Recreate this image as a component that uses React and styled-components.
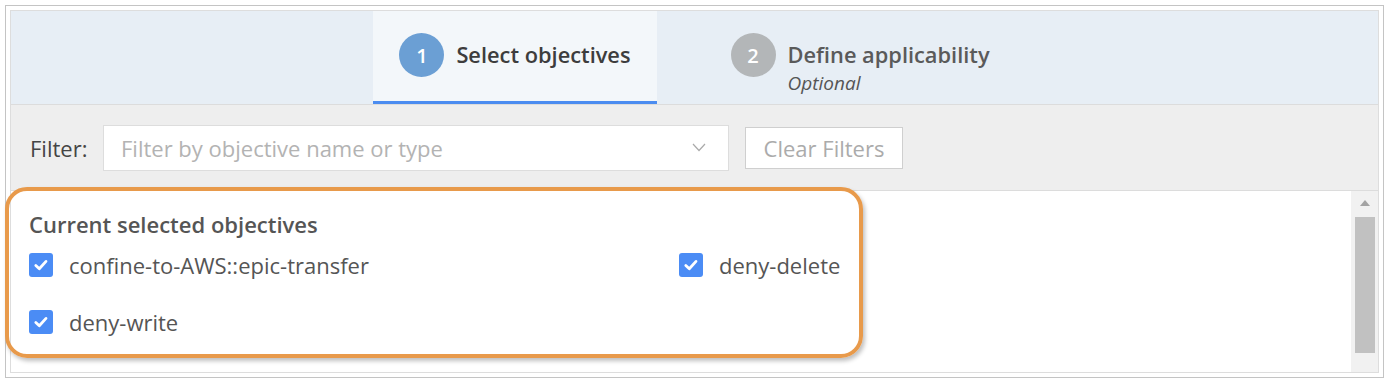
import React from 'react'
import styled, { createGlobalStyle } from 'styled-components'

const GlobalStyle = createGlobalStyle`
  body {
    margin: 0;
    background: #ffffff;
    font-family: "Open Sans", "Liberation Sans", sans-serif;
  }
`

const Frame = styled.div`
  margin: 5px;
  width: 1379px;
  height: 373px;
  box-sizing: border-box;
  border: 1px solid #c4c4c4;
  padding: 4px;
`

const Panel = styled.div`
  height: 100%;
  box-sizing: border-box;
  border: 1px solid #dddddd;
  display: flex;
  flex-direction: column;
  position: relative;
`

const StepBar = styled.div`
  height: 93px;
  background: #e7eef5;
  border-bottom: 1px solid #dcdcdc;
  display: flex;
  justify-content: center;
  gap: 48px;
`

const Step = styled.div`
  display: flex;
  align-items: flex-start;
  gap: 12px;
  padding: 22px 26px 0;
  box-sizing: border-box;
  background: ${p => (p.$active ? '#f3f7fa' : 'transparent')};
  border-bottom: 3px solid ${p => (p.$active ? '#4b8cf0' : 'transparent')};
`

const StepNumber = styled.div`
  width: 45px;
  height: 44px;
  border-radius: 50%;
  background: ${p => (p.$active ? '#6b9fd4' : '#b3b6b8')};
  color: #ffffff;
  font-size: 20px;
  font-weight: 600;
  display: flex;
  align-items: center;
  justify-content: center;
  flex-shrink: 0;
`

const StepText = styled.div`
  display: flex;
  flex-direction: column;
`

const StepTitle = styled.div`
  height: 44px;
  line-height: 44px;
  font-size: 21.8px;
  font-weight: 600;
  color: ${p => (p.$active ? '#3d3d3d' : '#5a5a5a')};
  white-space: nowrap;
`

const StepSub = styled.div`
  font-size: 19px;
  font-style: italic;
  color: #555555;
  line-height: 18px;
  margin-top: -3px;
`

const FilterBar = styled.div`
  height: 85px;
  background: #eeeeee;
  border-bottom: 1px solid #dcdcdc;
  display: flex;
  align-items: center;
  padding: 0 19px;
  gap: 16px;
`

const FilterLabel = styled.span`
  font-size: 22px;
  color: #444444;
  width: 57px;
`

const FilterInput = styled.div`
  width: 626px;
  height: 46px;
  box-sizing: border-box;
  background: #ffffff;
  border: 1px solid #dddddd;
  display: flex;
  align-items: center;
  justify-content: space-between;
  padding: 0 22px 0 17px;
  font-size: 22px;
  color: #b3b3b3;
`

const ClearButton = styled.button`
  height: 42px;
  width: 158px;
  box-sizing: border-box;
  background: #ffffff;
  border: 1px solid #cfcfcf;
  font-family: inherit;
  font-size: 22px;
  color: #ababab;
  padding: 0;
`

const Content = styled.div`
  flex: 1;
  display: flex;
  background: #ffffff;
`

const Objectives = styled.div`
  flex: 1;
  padding: 18px 18px 0;
`

const SectionTitle = styled.div`
  font-size: 22px;
  font-weight: 600;
  color: #555555;
  line-height: 30px;
`

const Grid = styled.div`
  display: grid;
  grid-template-columns: 650px 1fr;
  row-gap: 33px;
  margin-top: 14px;
`

const Item = styled.label`
  display: flex;
  align-items: center;
  gap: 16px;
  font-size: 22px;
  color: #555555;
  height: 24px;
  white-space: nowrap;
`

const Box = styled.span`
  width: 24px;
  height: 24px;
  border-radius: 3px;
  background: #4b8cf5;
  display: flex;
  align-items: center;
  justify-content: center;
  flex-shrink: 0;
`

const Scrollbar = styled.div`
  width: 27px;
  background: #f1f1f1;
  display: flex;
  flex-direction: column;
  align-items: center;
  padding-top: 9px;
  box-sizing: border-box;
`

const ScrollArrow = styled.div`
  width: 0;
  height: 0;
  border-left: 5px solid transparent;
  border-right: 5px solid transparent;
  border-bottom: 6px solid #a3a3a3;
`

const ScrollThumb = styled.div`
  width: 20px;
  height: 136px;
  background: #c1c1c1;
  margin-top: 11px;
`

const Highlight = styled.div`
  position: absolute;
  left: -6px;
  top: 176px;
  width: 858px;
  height: 171px;
  box-sizing: border-box;
  border: 4px solid #e89a4b;
  border-radius: 22px;
  box-shadow: 2px 3px 4px rgba(0, 0, 0, 0.25);
  pointer-events: none;
`

const Check = () => (
  <svg width="18" height="18" viewBox="0 0 18 18">
    <path d="M3.8 9.4 L7.3 12.8 L14 5.4" fill="none" stroke="#fff" strokeWidth="2.8" strokeLinecap="round" strokeLinejoin="round" />
  </svg>
)

const Chevron = () => (
  <svg width="14" height="9" viewBox="0 0 14 9">
    <path d="M1 1 L7 7.5 L13 1" fill="none" stroke="#aaaaaa" strokeWidth="1.2" />
  </svg>
)

const objectives = ['confine-to-AWS::epic-transfer', 'deny-delete', 'deny-write']

export default function App() {
  return (
    <>
      <GlobalStyle />
      <Frame>
        <Panel>
          <StepBar>
            <Step $active>
              <StepNumber $active>1</StepNumber>
              <StepText>
                <StepTitle $active>Select objectives</StepTitle>
              </StepText>
            </Step>
            <Step>
              <StepNumber>2</StepNumber>
              <StepText>
                <StepTitle>Define applicability</StepTitle>
                <StepSub>Optional</StepSub>
              </StepText>
            </Step>
          </StepBar>
          <FilterBar>
            <FilterLabel>Filter:</FilterLabel>
            <FilterInput>
              <span>Filter by objective name or type</span>
              <Chevron />
            </FilterInput>
            <ClearButton>Clear Filters</ClearButton>
          </FilterBar>
          <Content>
            <Objectives>
              <SectionTitle>Current selected objectives</SectionTitle>
              <Grid>
                {objectives.map(name => (
                  <Item key={name}>
                    <Box><Check /></Box>
                    {name}
                  </Item>
                ))}
              </Grid>
            </Objectives>
            <Scrollbar>
              <ScrollArrow />
              <ScrollThumb />
            </Scrollbar>
          </Content>
          <Highlight />
        </Panel>
      </Frame>
    </>
  )
}
